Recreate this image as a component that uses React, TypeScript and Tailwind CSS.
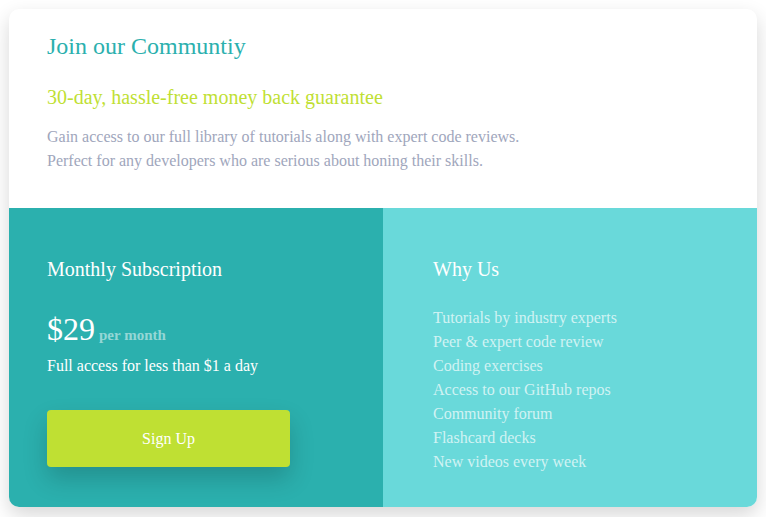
const perks = [
  "Tutorials by industry experts",
  "Peer & expert code review",
  "Coding exercises",
  "Access to our GitHub repos",
  "Community forum",
  "Flashcard decks",
  "New videos every week",
];

export default function App() {
  return (
    <div className="min-h-[517px] bg-white p-[9px] font-['Liberation_Serif',serif]">
      <div className="overflow-hidden rounded-[10px] bg-white shadow-[0_8px_20px_rgba(0,0,0,0.16)]">
        <div className="px-[38px] pt-[23px] pb-[35px]">
          <h1 className="text-[24px] leading-[28px] text-[#2bb0ae]">Join our Communtiy</h1>
          <h2 className="mt-[25px] text-[20px] leading-[24px] text-[#bfdf34]">
            30-day, hassle-free money back guarantee
          </h2>
          <p className="mt-[16px] text-[16px] leading-[24px] text-[#a0a6bc]">
            Gain access to our full library of tutorials along with expert code reviews.
            <br />
            Perfect for any developers who are serious about honing their skills.
          </p>
        </div>

        <div className="grid h-[299px] grid-cols-2">
          <div className="bg-[#2bb0ae] px-[38px] pt-[49px] text-white">
            <h3 className="text-[20px] leading-[24px]">Monthly Subscription</h3>
            <div className="mt-[28px] flex items-baseline gap-[4px]">
              <span className="text-[32px] leading-[40px]">$29</span>
              <span className="text-[15px] font-bold text-white/50">per month</span>
            </div>
            <p className="mt-[5px] text-[16px] leading-[24px]">Full access for less than $1 a day</p>
            <button className="mt-[32px] h-[57px] w-[243px] rounded-[4px] bg-[#bfe033] text-[16px] text-white shadow-[0_12px_24px_rgba(0,0,0,0.18)]">
              Sign Up
            </button>
          </div>

          <div className="bg-[#69d9da] pl-[50px] pt-[49px] text-white">
            <h3 className="text-[20px] leading-[24px]">Why Us</h3>
            <ul className="mt-[25px] text-[16px] leading-[24px] text-white/70">
              {perks.map((p) => (
                <li key={p}>{p}</li>
              ))}
            </ul>
          </div>
        </div>
      </div>
    </div>
  );
}
